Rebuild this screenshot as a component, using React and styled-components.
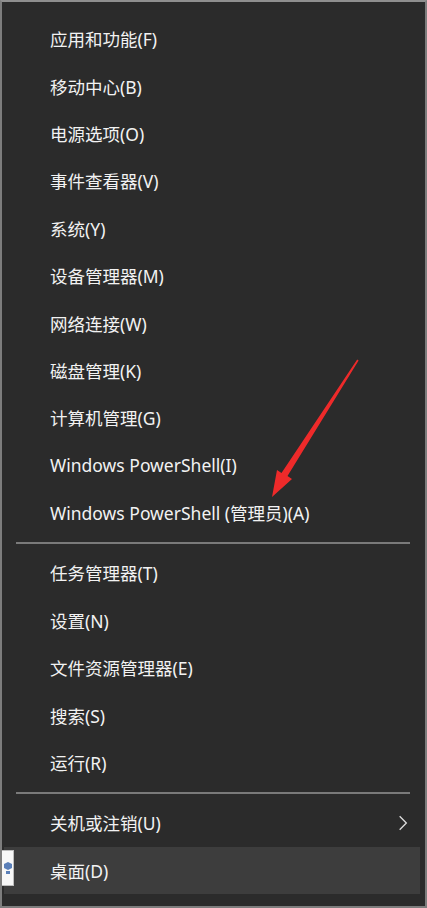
import styled, { createGlobalStyle } from "styled-components";

const GlobalStyle = createGlobalStyle`
  html, body {
    margin: 0;
    padding: 0;
    background: #2b2b2b;
  }
  * { box-sizing: border-box; }
`;

const groups = [
  [
    "应用和功能(F)",
    "移动中心(B)",
    "电源选项(O)",
    "事件查看器(V)",
    "系统(Y)",
    "设备管理器(M)",
    "网络连接(W)",
    "磁盘管理(K)",
    "计算机管理(G)",
    "Windows PowerShell(I)",
    "Windows PowerShell (管理员)(A)",
  ],
  ["任务管理器(T)", "设置(N)", "文件资源管理器(E)", "搜索(S)", "运行(R)"],
];

export default function App() {
  return (
    <>
      <GlobalStyle />
      <Menu>
        {groups.map((g, i) => (
          <Group key={i}>
            {g.map((label) => (
              <Item key={label}>{label}</Item>
            ))}
            <Separator />
          </Group>
        ))}
        <Item>
          关机或注销(U)
          <Chevron viewBox="0 0 12 20">
            <polyline points="2,2 10,10 2,18" />
          </Chevron>
        </Item>
        <Item $hover>桌面(D)</Item>
        <TipEdge>
          <svg viewBox="0 0 8 12" width="8" height="12">
            <path d="M0 2 L4 0 L8 2 L8 6 L4 8 L0 6 Z M2 9 L6 9 L6 12 L2 12 Z" fill="#5a7fb8" />
          </svg>
        </TipEdge>
        <Arrow viewBox="0 0 427 908">
          <polygon points="357.2,359.4 358.6,360.4 287.5,476 292,479 272,497 277,470 281.5,473" />
        </Arrow>
      </Menu>
    </>
  );
}

const Menu = styled.div`
  position: relative;
  width: 427px;
  height: 908px;
  background: #2b2b2b;
  border: 2px solid #7d7d7d;
  border-top-color: #8f8f8f;
  padding: 13px 5px 0 2px;
  font-family: "Noto Sans", "Noto Sans CJK SC", sans-serif;
  overflow: hidden;
`;

const Group = styled.div`
  display: flex;
  flex-direction: column;
`;

const Item = styled.div`
  display: flex;
  align-items: center;
  justify-content: space-between;
  height: 47.4px;
  padding: 0 12px 0 46px;
  font-size: 17.5px;
  color: #f2f2f2;
  background: ${(p) => (p.$hover ? "#3d3d3d" : "transparent")};
  white-space: nowrap;
`;

const Separator = styled.div`
  height: 2px;
  margin: 5.5px 10px 5.5px 12px;
  background: #7a7a7a;
`;

const Chevron = styled.svg`
  width: 10px;
  height: 18px;
  fill: none;
  stroke: #dcdcdc;
  stroke-width: 1.6;
`;

const TipEdge = styled.div`
  position: absolute;
  left: -2px;
  top: 848px;
  width: 14px;
  height: 36px;
  background: #f7f7f7;
  border: 1px solid #bdbdbd;
  display: flex;
  align-items: center;
  justify-content: flex-end;
  padding-right: 1px;
`;

const Arrow = styled.svg`
  position: absolute;
  left: -2px;
  top: -2px;
  width: 427px;
  height: 908px;
  pointer-events: none;
  fill: #ee2a2a;
`;
